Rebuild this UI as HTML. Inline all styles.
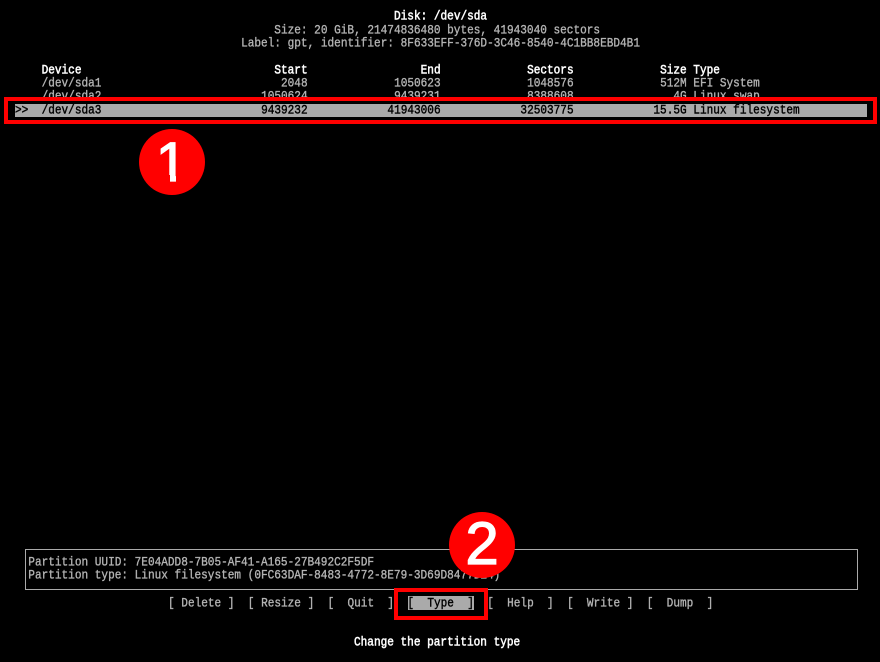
<!DOCTYPE html>
<html><head><meta charset="utf-8"><style>
html,body{margin:0;padding:0;background:#000;width:880px;height:662px;overflow:hidden}
#t{position:absolute;left:0;top:0;width:880px;height:662px;filter:blur(.35px)}
.l{position:absolute;white-space:pre;font:normal 11.083px/13.3px "Liberation Mono",monospace;color:#b4b4b4;height:13.3px;margin-top:1.2px;transform:scaleY(1.2);-webkit-text-stroke:.3px currentColor}
.w{color:#fff;-webkit-text-stroke:.45px #fff}
.s{color:#000;-webkit-text-stroke:.35px #000}
.box{position:absolute;box-sizing:border-box}
.c{position:absolute;border-radius:50%;background:#f00;width:66px;height:66px}
.d{position:absolute;color:#fff;font-family:"Liberation Sans",sans-serif;-webkit-text-stroke:1.3px #fff;text-align:center;white-space:pre}
.f{position:absolute;background:#f00}
</style></head><body>
<div id="t">
<div class="l w" style="left:394px;top:10.3px">Disk: /dev/sda</div>
<div class="l" style="left:274.3px;top:23.6px">Size: 20 GiB, 21474836480 bytes, 41943040 sectors</div>
<div class="l" style="left:241.1px;top:37px">Label: gpt, identifier: 8F633EFF-376D-3C46-8540-4C1BB8EBD4B1</div>

<div class="l w" style="left:41.6px;top:63.5px">Device</div>
<div class="l w" style="right:572.4px;top:63.5px">Start</div>
<div class="l w" style="right:439.4px;top:63.5px">End</div>
<div class="l w" style="right:306.4px;top:63.5px">Sectors</div>
<div class="l w" style="right:193.35px;top:63.5px">Size</div>
<div class="l w" style="left:693.3px;top:63.5px">Type</div>

<div class="l" style="left:41.6px;top:76.8px">/dev/sda1</div>
<div class="l" style="right:572.4px;top:76.8px">2048</div>
<div class="l" style="right:439.4px;top:76.8px">1050623</div>
<div class="l" style="right:306.4px;top:76.8px">1048576</div>
<div class="l" style="right:193.35px;top:76.8px">512M</div>
<div class="l" style="left:693.3px;top:76.8px">EFI System</div>

<div class="l" style="left:41.6px;top:90.1px">/dev/sda2</div>
<div class="l" style="right:572.4px;top:90.1px">1050624</div>
<div class="l" style="right:439.4px;top:90.1px">9439231</div>
<div class="l" style="right:306.4px;top:90.1px">8388608</div>
<div class="l" style="right:193.35px;top:90.1px">4G</div>
<div class="l" style="left:693.3px;top:90.1px">Linux swap</div>

<div class="box" style="left:5px;top:97px;width:871px;height:27px;background:#000"></div>
<div class="box" style="left:15px;top:104px;width:852px;height:13.3px;background:#aaa"></div>
<div class="l s" style="left:15px;top:103.4px">&gt;&gt;</div>
<div class="l s" style="left:41.6px;top:103.4px">/dev/sda3</div>
<div class="l s" style="right:572.4px;top:103.4px">9439232</div>
<div class="l s" style="right:439.4px;top:103.4px">41943006</div>
<div class="l s" style="right:306.4px;top:103.4px">32503775</div>
<div class="l s" style="right:193.35px;top:103.4px">15.5G</div>
<div class="l s" style="left:693.3px;top:103.4px">Linux filesystem</div>

<div class="box" style="left:24.5px;top:549px;width:833px;height:41px;border:1px solid #aaa"></div>
<div class="l" style="left:28.3px;top:555.7px">Partition UUID: 7E04ADD8-7B05-AF41-A165-27B492C2F5DF</div>
<div class="l" style="left:28.3px;top:569px">Partition type: Linux filesystem (0FC63DAF-8483-4772-8E79-3D69D8477DE4)</div>

<div class="box" style="left:407.7px;top:596px;width:66.6px;height:14px;background:#aaa"></div>
<div class="l" style="left:168px;top:596.4px">[ Delete ]  [ Resize ]  [  Quit  ]</div>
<div class="l s" style="left:407.4px;top:596.4px">[  Type  ]</div>
<div class="l" style="left:487.2px;top:596.4px">[  Help  ]  [  Write ]  [  Dump  ]</div>
<div class="l w" style="left:354px;top:635.7px">Change the partition type</div>
</div>

<div class="box" style="left:4px;top:97px;width:873px;height:27px;border:4.5px solid #f00"></div>
<div class="box" style="left:394px;top:587.5px;width:94px;height:32px;border:4px solid #f00"></div>

<div class="c" style="left:139px;top:129px"></div>
<div class="d" style="left:139.4px;top:129px;width:64px;font-size:56px;line-height:66px">1</div>
<div class="f" style="left:155px;top:175px;width:14.6px;height:8px"></div>
<div class="f" style="left:176px;top:175px;width:14px;height:8px"></div>

<div class="c" style="left:449px;top:512px"></div>
<div class="d" style="left:449px;top:511px;width:66px;font-size:60px;line-height:66px">2</div>
</body></html>
